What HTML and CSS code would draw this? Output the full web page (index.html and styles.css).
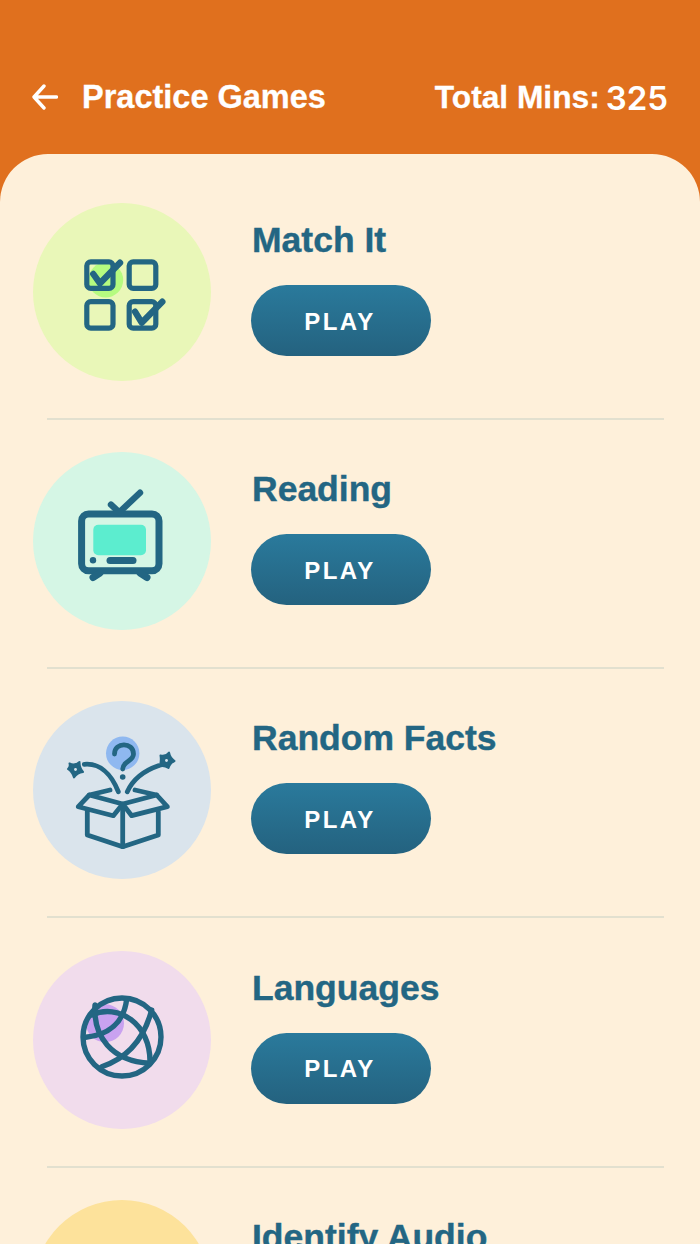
FILE: index.html
```html
<!DOCTYPE html>
<html lang="en">
<head>
    <meta charset="UTF-8">
    <meta name="viewport" content="width=device-width, initial-scale=1.0">
    <title>Practice Games</title>
    <link rel="stylesheet" href="styles.css">
</head>
<body>
    <header class="top-bar">
        <div class="top-left">
            <svg class="back-arrow" viewBox="0 0 26 26" width="26" height="26">
                <path d="M12 2 L2 13 L12 24 M2.5 13 H24.5"/>
            </svg>
            <h1>Practice Games</h1>
        </div>
        <div class="total">
            <span class="total-label">Total Mins:</span>
            <span class="total-value">325</span>
        </div>
    </header>

    <main class="panel">
        <section class="game-row">
            <div class="game-icon lime">
                <svg viewBox="0 0 178 178" width="178" height="178">
                    <circle class="spot" cx="72.7" cy="77" r="17.5" fill="#b5fb80"/>
                    <rect x="53.8" y="58.8" width="26.2" height="26.6" rx="4"/>
                    <rect x="96.2" y="58.8" width="26.6" height="26.6" rx="4"/>
                    <rect x="53.8" y="98.6" width="26.2" height="26.6" rx="4"/>
                    <rect x="96.2" y="98.6" width="26.6" height="26.6" rx="4"/>
                    <path class="thick" d="M60.3 71 L67 80.3 L87 59.7"/>
                    <path class="thick" d="M102 108.7 L108.7 119.7 L129.3 98.7"/>
                </svg>
            </div>
            <div class="game-info">
                <h2>Match It</h2>
                <button class="play-btn">PLAY</button>
            </div>
        </section>
        <hr class="divider">

        <section class="game-row">
            <div class="game-icon mint">
                <svg viewBox="0 0 178 178" width="178" height="178">
                    <rect class="spot" x="60.3" y="72.7" width="52.7" height="30.6" rx="5" fill="#5cedcf"/>
                    <rect class="wide" x="48.6" y="62" width="77.4" height="56.8" rx="7"/>
                    <path class="thick" d="M78 52.7 L86.3 60.3 L107 40.7"/>
                    <path class="wide" d="M77 108.5 H100"/>
                    <path class="wide" d="M60 125.5 L67 121 M114 125.5 L107 121"/>
                    <circle class="spot" cx="60" cy="108.3" r="3.2" fill="#236683"/>
                </svg>
            </div>
            <div class="game-info">
                <h2>Reading</h2>
                <button class="play-btn">PLAY</button>
            </div>
        </section>
        <hr class="divider">

        <section class="game-row">
            <div class="game-icon steel">
                <svg viewBox="0 0 178 178" width="178" height="178">
                    <circle class="spot" cx="89.7" cy="52.3" r="16.7" fill="#8fb8f0"/>
                    <path class="mid" d="M81.5 53 C81.5 40.5 100.5 41 100.5 53 C100.5 60.5 89.7 60 89.7 68"/>
                    <circle class="spot" cx="89.7" cy="76" r="2.8" fill="#236683"/>
                    <path class="star" d="M36.5 62.5 Q42 65 46.5 61 Q46.5 67 50 71 Q44.5 71.5 41 76.5 Q39.5 71 35 68 Q37.5 66 36.5 62.5Z"/>
                    <circle class="spot" cx="42.5" cy="68.5" r="1.4" fill="#dae4ec"/>
                    <path class="star" d="M127.5 54.5 Q132.5 56 136 51.5 Q137 57 141.5 60 Q137 62 135.5 67 Q131 64 126.5 65.5 Q128.5 60 127.5 54.5Z"/>
                    <circle class="spot" cx="133.5" cy="59.5" r="1.4" fill="#dae4ec"/>
                    <path class="mid" d="M51.3 63.3 C66 62 78 72 85.3 90.7"/>
                    <path class="mid" d="M125.3 64.7 C110 70 100 78 94.3 90.7"/>
                    <path class="mid" d="M54.3 109 V134 L89.7 145.7 L125.3 134 V110.7"/>
                    <path class="mid" d="M89.7 104 V145.7"/>
                    <path class="mid" d="M45.3 105.7 L56.3 94 L89.7 103 L80.3 114.7Z"/>
                    <path class="mid" d="M134.3 105.7 L123.7 94 L89.7 103 L98.7 114.7Z"/>
                    <path class="mid" d="M56.3 94 L77 89 M123.7 94 L102 89"/>
                </svg>
            </div>
            <div class="game-info">
                <h2>Random Facts</h2>
                <button class="play-btn">PLAY</button>
            </div>
        </section>
        <hr class="divider">

        <section class="game-row">
            <div class="game-icon pink">
                <svg viewBox="0 0 178 178" width="178" height="178">
                    <circle class="spot" cx="72" cy="72.3" r="19" fill="#c9a2f0"/>
                    <circle class="globe" cx="89" cy="86" r="39"/>
                    <path class="globe" d="M52.7 86.3 C75 84 91 72 93.7 48"/>
                    <path class="globe" d="M62 54 C60 85 78 110 117 112.3"/>
                    <path class="globe" d="M58.7 64 C85 52 118 72 117 112.3"/>
                    <path class="globe" d="M68.7 115.7 C98 106 112 84 118.7 59"/>
                </svg>
            </div>
            <div class="game-info">
                <h2>Languages</h2>
                <button class="play-btn">PLAY</button>
            </div>
        </section>
        <hr class="divider">

        <section class="game-row">
            <div class="game-icon sun"></div>
            <div class="game-info">
                <h2>Identify Audio</h2>
                <button class="play-btn">PLAY</button>
            </div>
        </section>
    </main>
</body>
</html>
```

FILE: styles.css
```css
body {
    margin: 0;
    padding: 0;
    height: 1244px;
    overflow: hidden;
    font-family: "Liberation Sans", Arial, sans-serif;
    background: #e0701e;
    color: #236683;
}
.top-bar {
    height: 154px;
    box-sizing: border-box;
    padding: 0 32px;
    display: flex;
    align-items: flex-end;
    justify-content: space-between;
    color: white;
}
.top-left {
    display: flex;
    align-items: center;
    gap: 24px;
    padding-bottom: 37px;
}
.back-arrow {
    fill: none;
    stroke: white;
    stroke-width: 3.4;
    stroke-linecap: round;
    stroke-linejoin: round;
}
h1 {
    margin: 0;
    font-size: 32.5px;
    line-height: 40px;
    font-weight: bold;
    -webkit-text-stroke: 0.3px white;
}
.total {
    display: flex;
    align-items: center;
    gap: 6px;
    padding-bottom: 37px;
    line-height: 40px;
}
.total-label {
    font-size: 31.7px;
    font-weight: bold;
    -webkit-text-stroke: 0.3px white;
}
.total-value {
    font-family: "Inter", sans-serif;
    font-size: 33px;
    font-weight: 600;
    position: relative;
    top: 1px;
}
.panel {
    height: 1090px;
    box-sizing: border-box;
    padding-top: 49px;
    background: #fef0da;
    border-radius: 48px 48px 0 0;
    overflow: hidden;
}
.game-row {
    display: flex;
    gap: 40px;
    padding: 0 0 37px 33px;
}
.game-icon {
    width: 178px;
    height: 178px;
    border-radius: 50%;
    flex-shrink: 0;
}
.game-icon svg {
    display: block;
    fill: none;
    stroke: #236683;
    stroke-width: 5.2;
    stroke-linecap: round;
    stroke-linejoin: round;
}
.game-icon .spot {
    stroke: none;
}
.game-icon .thick {
    stroke-width: 6.4;
}
.game-icon .wide {
    stroke-width: 7;
}
.game-icon .mid {
    stroke-width: 4.8;
}
.game-icon .globe {
    stroke-width: 5.4;
}
.game-icon .star {
    fill: #236683;
    stroke-width: 2;
}
.lime { background: #e9f7b8; }
.mint { background: #d5f6e5; }
.steel { background: #dae4ec; }
.pink { background: #f1dcec; }
.sun { background: #fde29b; }
.game-info {
    padding-top: 17px;
}
h2 {
    margin: 0 0 25px 1px;
    font-size: 35.5px;
    line-height: 40px;
    font-weight: bold;
    -webkit-text-stroke: 0.4px #236683;
}
.play-btn {
    display: block;
    width: 180px;
    height: 71px;
    padding: 2px 2px 0 0;
    border: none;
    border-radius: 36px;
    background: linear-gradient(to bottom, #2a7a9c, #24627f);
    color: white;
    font-family: "Liberation Sans", Arial, sans-serif;
    font-size: 24px;
    font-weight: bold;
    letter-spacing: 2.4px;
}
.divider {
    height: 2px;
    border: none;
    background: #e2e0cf;
    margin: 0 36px 32.2px 47px;
}
```
